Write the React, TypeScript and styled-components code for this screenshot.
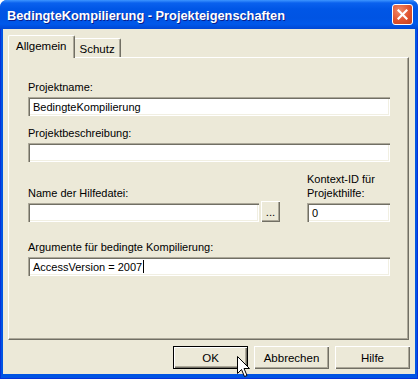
import styled, { createGlobalStyle } from 'styled-components';

const Global = createGlobalStyle`
  html, body { margin: 0; padding: 0; background: #fff; }
  body { font-family: "Liberation Sans", Arial, sans-serif; font-size: 11px; color: #000; }
`;

const Fenster = styled.div`
  width: 418px;
  height: 379px;
  display: flex;
  flex-direction: column;
  background: #0054e3;
  border-radius: 7px 7px 0 0;
  overflow: hidden;
  position: relative;
`;

const Titelleiste = styled.div`
  height: 29px;
  flex: none;
  display: flex;
  align-items: center;
  justify-content: space-between;
  padding: 0 5px 0 7px;
  background: linear-gradient(180deg, #3d95ff 0px, #0a61ee 3px, #0056e6 9px, #0054e3 18px, #0058eb 24px, #0047d4 29px);
`;

const Titel = styled.span`
  color: #fff;
  font-family: "Liberation Sans", Arial, sans-serif;
  font-weight: bold;
  font-size: 12.8px;
  text-shadow: 1px 1px 0 #0a1e8c;
  margin-top: 1px;
`;

const Schliessen = styled.div`
  width: 19px;
  height: 19px;
  border: 1px solid #fff;
  border-radius: 3px;
  background: radial-gradient(circle at 35% 30%, #f08a6a 0%, #e0532f 55%, #c4401e 100%);
  display: flex;
  align-items: center;
  justify-content: center;
`;

const Rahmen = styled.div`
  flex: 1;
  display: flex;
  padding: 0 3px 4px 3px;
  border-left: 1px solid #0831d9;
  border-right: 1px solid #0831d9;
  border-bottom: 1px solid #0831d9;
`;

const Inhalt = styled.div`
  flex: 1;
  margin-left: -1px;
  margin-right: -1px;
  background: #ece9d8;
  display: flex;
  flex-direction: column;
  padding: 6px 6px 5px 5px;
`;

const Reiterleiste = styled.div`
  display: flex;
  align-items: flex-end;
  height: 22px;
  padding-left: 2px;
  position: relative;
  z-index: 1;
`;

const Reiter = styled.div<{ $aktiv?: boolean }>`
  height: ${(p) => (p.$aktiv ? '23px' : '19px')};
  margin: ${(p) => (p.$aktiv ? '0 -1px -1px -2px' : '0')};
  padding: 0 ${(p) => (p.$aktiv ? '7px' : '5px')};
  box-sizing: border-box;
  display: flex;
  align-items: ${(p) => (p.$aktiv ? 'flex-start' : 'center')};
  padding-top: ${(p) => (p.$aktiv ? '4px' : '1px')};
  background: #ece9d8;
  border-top: 1px solid #fff;
  border-left: 1px solid #fff;
  border-right: 1px solid #716f64;
  border-radius: 2px 2px 0 0;
  box-shadow: inset -1px 0 0 #aca899;
  font-size: 11.5px;
  position: relative;
  z-index: ${(p) => (p.$aktiv ? 2 : 1)};
`;

const Tafel = styled.div`
  height: 283px;
  box-sizing: border-box;
  border-top: 1px solid #fff;
  border-left: 1px solid #fff;
  border-right: 1px solid #716f64;
  border-bottom: 1px solid #716f64;
  box-shadow: inset -1px -1px 0 #aca899;
  padding: 22px 18px 0 19px;
  display: flex;
  flex-direction: column;
`;

const Feld = styled.div<{ $abstand?: number; $breite?: number; $wachsen?: boolean }>`
  display: flex;
  flex-direction: column;
  margin-top: ${(p) => p.$abstand ?? 0}px;
  flex: ${(p) => (p.$wachsen ? '1' : 'none')};
  ${(p) => (p.$breite ? `width: ${p.$breite}px;` : '')}
`;

const Beschriftung = styled.label`
  font-size: 11px;
  line-height: 14px;
  margin-bottom: 3px;
`;

const Textfeld = styled.div`
  height: 19px;
  box-sizing: border-box;
  background: #fff;
  box-shadow: inset 1px 1px 0 #aca899, inset 2px 2px 0 #716f64, inset -1px -1px 0 #fff, inset -2px -2px 0 #f1efe2;
  padding: 0 4px 0 5px;
  display: flex;
  align-items: center;
  font-size: 11px;
  white-space: nowrap;
`;

const Schreibmarke = styled.span`
  display: inline-block;
  width: 1px;
  height: 13px;
  background: #000;
  margin-left: 1px;
`;

const Zeile = styled.div<{ $abstand?: number }>`
  display: flex;
  align-items: flex-end;
  margin-top: ${(p) => p.$abstand ?? 0}px;
`;

const Dateifeld = styled.div`
  flex: 1;
  display: flex;
  gap: 2px;
  align-items: flex-end;
  margin-right: 27px;
`;

const Knopf = styled.div<{ $breite: number; $hoehe: number; $standard?: boolean }>`
  width: ${(p) => p.$breite}px;
  height: ${(p) => p.$hoehe}px;
  box-sizing: border-box;
  background: #ece9d8;
  display: flex;
  align-items: center;
  justify-content: center;
  font-size: 11.5px;
  flex: none;
  box-shadow: ${(p) =>
    p.$standard
      ? 'inset 0 0 0 1px #000, inset 2px 2px 0 #fff, inset -2px -2px 0 #716f64, inset -3px -3px 0 #aca899'
      : 'inset 1px 1px 0 #fff, inset -1px -1px 0 #716f64, inset -2px -2px 0 #aca899'};
`;

const Knopfleiste = styled.div`
  display: flex;
  justify-content: flex-end;
  gap: 6px;
  margin-top: 6px;
  margin-right: -1px;
`;

const Zeiger = styled.svg`
  position: absolute;
  left: 237px;
  top: 356px;
`;

export default function App() {
  return (
    <>
      <Global />
      <Fenster>
        <Titelleiste>
          <Titel>BedingteKompilierung - Projekteigenschaften</Titel>
          <Schliessen>
            <svg width="11" height="11" viewBox="0 0 11 11">
              <path d="M1.5 1.5 L9.5 9.5 M9.5 1.5 L1.5 9.5" stroke="#fff" strokeWidth="2.2" strokeLinecap="square" />
            </svg>
          </Schliessen>
        </Titelleiste>
        <Rahmen>
          <Inhalt>
            <Reiterleiste>
              <Reiter $aktiv>Allgemein</Reiter>
              <Reiter>Schutz</Reiter>
            </Reiterleiste>
            <Tafel>
              <Feld>
                <Beschriftung>Projektname:</Beschriftung>
                <Textfeld>BedingteKompilierung</Textfeld>
              </Feld>
              <Feld $abstand={10}>
                <Beschriftung>Projektbeschreibung:</Beschriftung>
                <Textfeld />
              </Feld>
              <Zeile $abstand={10}>
                <Dateifeld>
                  <Feld $wachsen>
                    <Beschriftung>Name der Hilfedatei:</Beschriftung>
                    <Textfeld />
                  </Feld>
                  <Knopf $breite={19} $hoehe={21}>...</Knopf>
                </Dateifeld>
                <Feld $breite={83}>
                  <Beschriftung>Kontext-ID für Projekthilfe:</Beschriftung>
                  <Textfeld>0</Textfeld>
                </Feld>
              </Zeile>
              <Feld $abstand={18}>
                <Beschriftung>Argumente für bedingte Kompilierung:</Beschriftung>
                <Textfeld>
                  AccessVersion = 2007
                  <Schreibmarke />
                </Textfeld>
              </Feld>
            </Tafel>
            <Knopfleiste>
              <Knopf $breite={75} $hoehe={23} $standard>OK</Knopf>
              <Knopf $breite={75} $hoehe={23}>Abbrechen</Knopf>
              <Knopf $breite={75} $hoehe={23}>Hilfe</Knopf>
            </Knopfleiste>
          </Inhalt>
        </Rahmen>
        <Zeiger width="13" height="22" viewBox="0 0 13 22">
          <path
            d="M0.5 0.5 L0.5 17.5 L4.5 13.5 L7.5 20.5 L10 19.5 L7 12.5 L12.5 12.5 Z"
            fill="#fff"
            stroke="#000"
            strokeWidth="1"
            strokeLinejoin="miter"
          />
        </Zeiger>
      </Fenster>
    </>
  );
}
